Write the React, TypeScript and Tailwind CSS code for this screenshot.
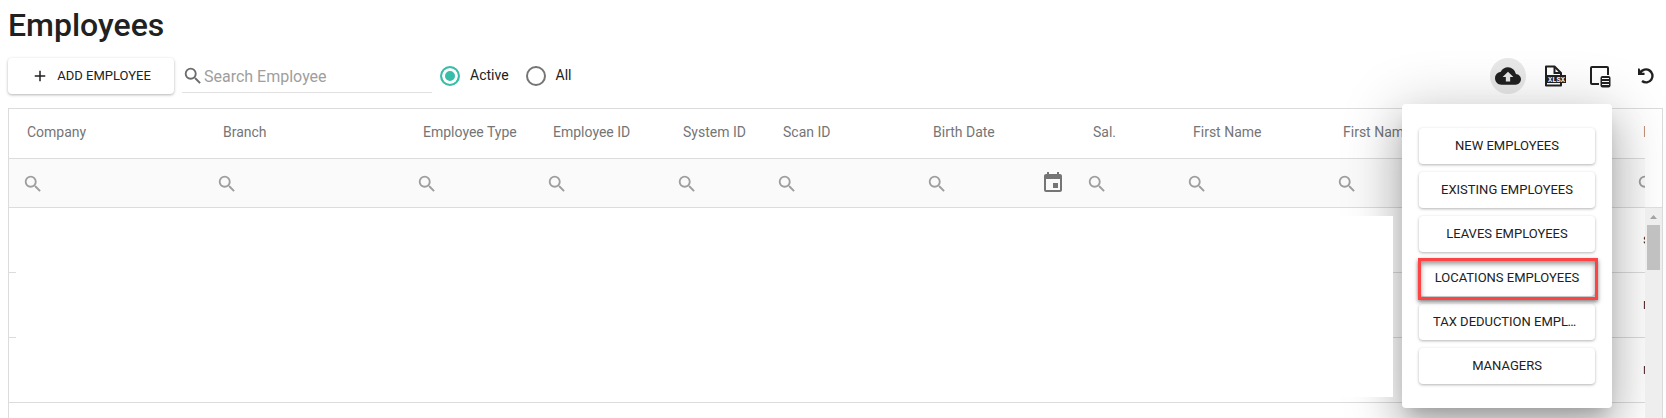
import { MdAdd, MdCloudUpload, MdEvent, MdSearch } from 'react-icons/md'

const columns = [
  { title: 'Company', width: 198 },
  { title: 'Branch', width: 200 },
  { title: 'Employee Type', width: 130 },
  { title: 'Employee ID', width: 130 },
  { title: 'System ID', width: 100 },
  { title: 'Scan ID', width: 150 },
  { title: 'Birth Date', width: 160, date: true },
  { title: 'Sal.', width: 100 },
  { title: 'First Name', width: 150 },
  { title: 'First Name', width: 150 },
  { title: '', width: 150 },
  { title: 'I', width: 150 },
]

const rows = ['s', 'n', 'n', '']

const uploads = [
  { label: 'NEW EMPLOYEES' },
  { label: 'EXISTING EMPLOYEES' },
  { label: 'LEAVES EMPLOYEES' },
  { label: 'LOCATIONS EMPLOYEES', marked: true },
  { label: 'TAX DEDUCTION EMPLOYEES' },
  { label: 'MANAGERS' },
]

function XlsxIcon() {
  return (
    <svg width="24" height="24" viewBox="0 0 24 24" fill="none">
      <path d="M4 2.500h8.500L19 9v12.500H4z" stroke="#212121" strokeWidth="2" strokeLinejoin="round" />
      <path d="M12.500 3v6H18.500" stroke="#212121" strokeWidth="2" />
      <rect x="5" y="11" width="19" height="8" fill="#212121" />
      <text
        x="14.500"
        y="17.500"
        textAnchor="middle"
        fontSize="7"
        fontWeight="700"
        fontFamily="Liberation Mono, monospace"
        fill="#fff"
      >
        XLSX
      </text>
    </svg>
  )
}

function ColumnChooserIcon() {
  return (
    <svg width="24" height="24" viewBox="0 0 24 24" fill="none">
      <path d="M11 20H4a1 1 0 0 1-1-1V4a1 1 0 0 1 1-1h15a1 1 0 0 1 1 1v7" stroke="#212121" strokeWidth="2" />
      <rect x="12.500" y="12" width="10" height="11.500" rx="2" fill="#212121" />
      <path d="M14 14.500h7M14 17.500h7M14 20.500h7" stroke="#fff" strokeWidth="1" />
    </svg>
  )
}

function RevertIcon() {
  return (
    <svg width="24" height="24" viewBox="0 0 24 24" fill="none">
      <path d="M6.300 8.800A6.500 6.500 0 1 1 8 17" stroke="#212121" strokeWidth="2.400" />
      <path d="M4 4.500v6.500h6.500V8.800H7.500L5.500 4.500z" fill="#212121" />
    </svg>
  )
}

export default function App() {
  return (
    <div className="flex h-screen flex-col overflow-hidden bg-white pl-2 pr-[3px] font-['Roboto',sans-serif] text-[#212121]">
      <h1 className="pt-1 text-[32px] font-medium leading-[42px]">Employees</h1>

      {/* Toolbar */}
      <div className="-mr-px mt-3 flex h-9 items-center">
        <button className="flex h-9 w-[166px] items-center justify-center gap-2 rounded bg-white text-[13px] shadow-[0_1px_3px_rgba(0,0,0,0.3)]">
          <MdAdd size={18} />
          ADD EMPLOYEE
        </button>
        <label className="ml-2 flex h-[34px] w-[250px] items-center border-b border-[#e0e0e0]">
          <MdSearch size={22} className="shrink-0 text-[#6b6b6b]" />
          <input
            aria-label="Search Employee"
            placeholder="Search Employee"
            className="w-full min-w-0 bg-transparent pt-0.5 text-base outline-none placeholder:text-[#9e9e9e]"
          />
        </label>
        <div className="ml-2 flex gap-[17px]">
          <label className="flex items-center gap-2.5 text-sm">
            <input
              type="radio"
              name="status"
              defaultChecked
              className="size-5 appearance-none rounded-full border-2 border-[#757575] checked:border-[#38bda9] checked:bg-[#38bda9] checked:shadow-[inset_0_0_0_3px_#fff]"
            />
            <span className="pb-0.5">Active</span>
          </label>
          <label className="flex items-center gap-2.5 text-sm">
            <input
              type="radio"
              name="status"
              className="size-5 appearance-none rounded-full border-2 border-[#757575] checked:border-[#38bda9] checked:bg-[#38bda9] checked:shadow-[inset_0_0_0_3px_#fff]"
            />
            <span className="pb-0.5">All</span>
          </label>
        </div>
        <div className="ml-auto flex gap-2.5">
          <button aria-label="Upload" className="flex size-9 items-center justify-center rounded-full bg-[#e8e8e8]">
            <MdCloudUpload size={26} />
          </button>
          <button aria-label="Export to Excel" className="flex size-9 items-center justify-center">
            <XlsxIcon />
          </button>
          <button aria-label="Column chooser" className="flex size-9 items-center justify-center">
            <ColumnChooserIcon />
          </button>
          <button aria-label="Revert" className="flex size-9 items-center justify-center">
            <RevertIcon />
          </button>
        </div>
      </div>

      {/* Grid */}
      <div className="relative mt-[14px] flex min-h-0 flex-1 border border-b-0 border-[#dcdcdc]">
        <div className="min-w-0 flex-1 overflow-hidden">
          <table className="w-[1768px] table-fixed border-separate border-spacing-0 text-left">
            <colgroup>
              {columns.map((col, i) => (
                <col key={i} style={{ width: col.width }} />
              ))}
            </colgroup>
            <thead>
              <tr>
                {columns.map((col, i) => (
                  <th
                    key={i}
                    className="h-[50px] whitespace-nowrap border-b border-[#dcdcdc] px-4 pb-1 text-sm font-normal text-[#757575] first:pl-[18px]"
                  >
                    {col.title}
                  </th>
                ))}
              </tr>
              <tr className="bg-[#fafafa]">
                {columns.map((col, i) => (
                  <td key={i} className="h-[49px] border-b border-[#dcdcdc] pl-[9px] pr-3 first:pl-[13px]">
                    <div className="flex items-end">
                      <MdSearch size={22} className="shrink-0 text-[#9e9e9e]" />
                      <input
                        aria-label={'Filter ' + col.title}
                        className="h-6 w-full min-w-0 bg-transparent text-sm outline-none"
                      />
                      {col.date && (
                        <button aria-label="Pick a date">
                          <MdEvent size={24} className="text-[#757575]" />
                        </button>
                      )}
                    </div>
                  </td>
                ))}
              </tr>
            </thead>
            <tbody>
              {rows.map((value, r) => (
                <tr key={r}>
                  <td colSpan={11} className="h-[65px] border-b border-[#dcdcdc]" />
                  <td className="border-b border-[#dcdcdc] px-4 pb-0.5 text-sm">{value}</td>
                </tr>
              ))}
            </tbody>
          </table>
        </div>

        {/* Scrollbar */}
        <div className="z-20 mt-[98px] flex w-[17px] flex-col items-center border-t border-[#dcdcdc] bg-[#eeeeee]">
          <svg width="17" height="17" viewBox="0 0 17 17">
            <path d="M5 11h7L8.500 7z" fill="#a3a3a3" />
          </svg>
          <div className="h-[45px] w-[13px] bg-[#c1c1c1]" />
        </div>

        {/* Blank area over the rows */}
        <div className="absolute left-[7px] right-[269px] top-[107px] z-20 h-[181px] bg-white" />

        {/* Upload menu */}
        <div className="absolute -top-[5px] right-[50px] z-10 flex w-[210px] flex-col gap-2 rounded bg-white px-[17px] py-6 shadow-[0_11px_15px_-7px_rgba(0,0,0,0.2),0_9px_56px_8px_rgba(0,0,0,0.18),0_24px_38px_3px_rgba(0,0,0,0.14)]">
          {uploads.map((item) => (
            <div key={item.label} className="relative">
              <button className="h-9 w-full truncate rounded bg-white px-3.5 text-[13px] shadow-[0_1px_3px_rgba(0,0,0,0.3)]">
                {item.label}
              </button>
              {item.marked && (
                <div className="pointer-events-none absolute -bottom-1 -left-px -right-[3px] -top-0.5 z-10 border-[3px] border-[#fb4444] shadow-[0_2px_4px_rgba(0,0,0,0.5),inset_0_3px_5px_rgba(0,0,0,0.4)]" />
              )}
            </div>
          ))}
        </div>
      </div>
    </div>
  )
}
